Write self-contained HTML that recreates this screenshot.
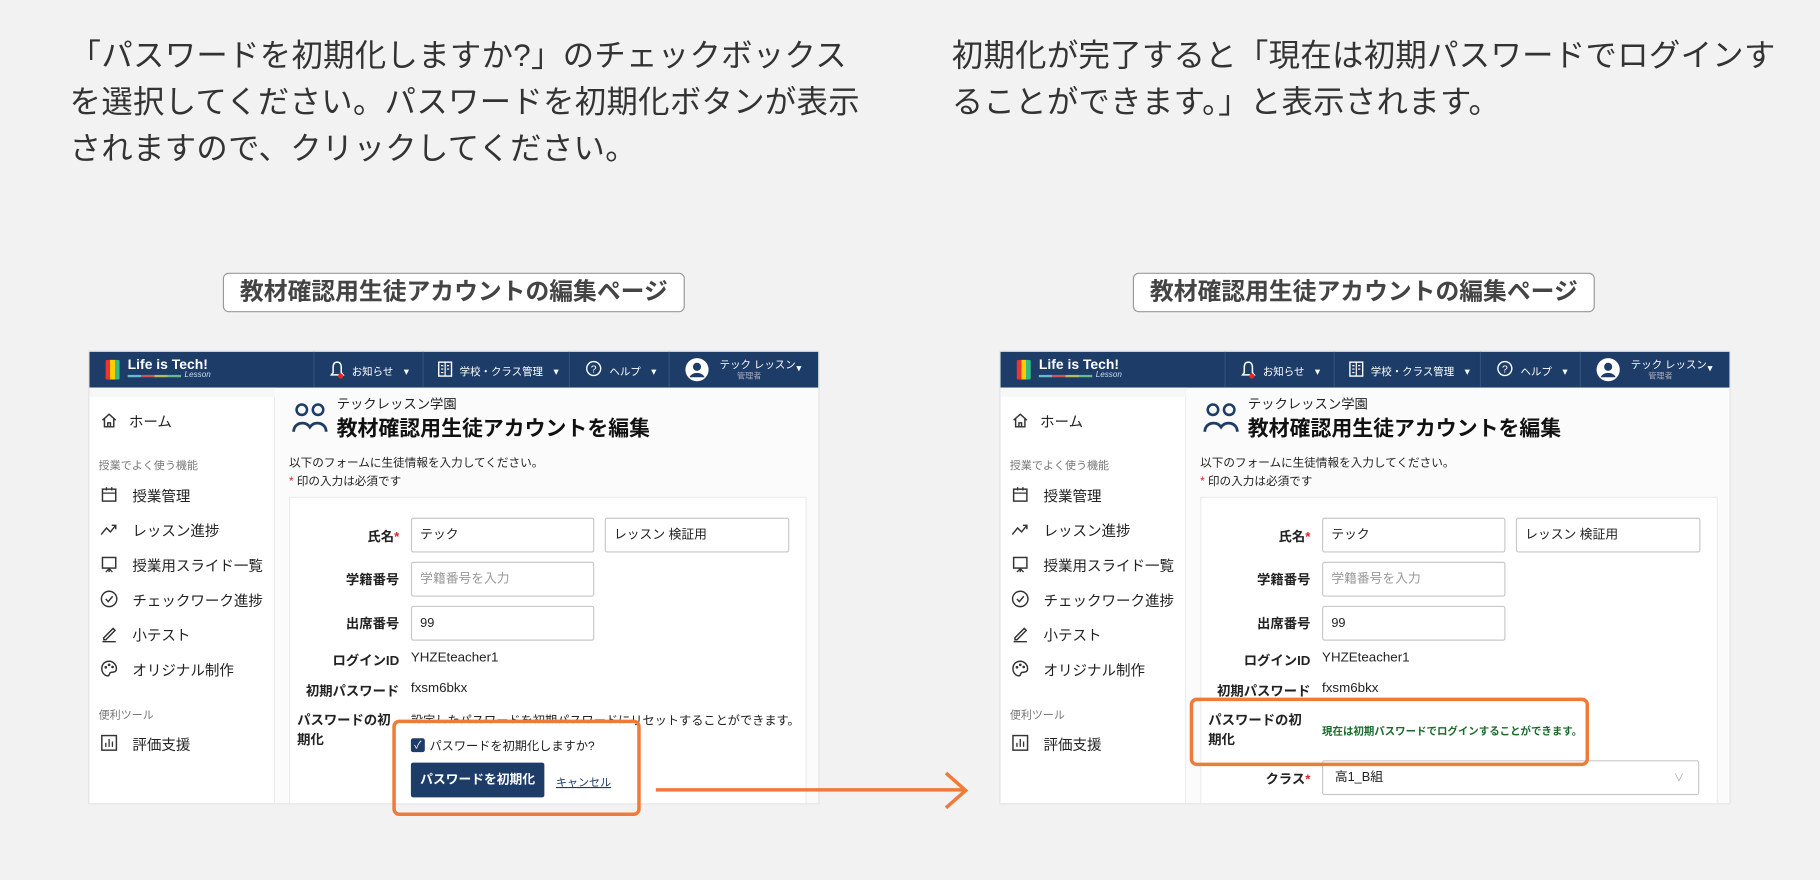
<!DOCTYPE html>
<html><head><meta charset="utf-8">
<style>
*{margin:0;padding:0;box-sizing:border-box}
html,body{width:1820px;height:880px;overflow:hidden;background:#f2f2f2}
body{font-family:"Liberation Sans","Noto Sans CJK JP",sans-serif;color:#333}
#w{position:absolute;left:0;top:0;width:1568px;height:758px;transform:scale(1.16071);transform-origin:0 0}
.a{position:absolute;white-space:nowrap}
.big{font-size:27px;line-height:40px;color:#333;letter-spacing:0.3px}
.tag{position:absolute;height:34px;border:1.5px solid #999;border-radius:5px;background:#fff;font-weight:bold;font-size:20.5px;line-height:31px;text-align:center;color:#444}
.ss{position:absolute;top:303px;width:628px;height:389px;background:#fff;overflow:hidden;outline:1px solid #e2e2e2}
.nav{position:absolute;left:0;top:0;width:100%;height:31px;background:#1d3c68;color:#fff;font-size:9px}
.sep{position:absolute;top:0;width:1px;height:31px;background:#35507a}
.side{position:absolute;left:0;top:31px;width:160px;height:358px;background:#fff;border-right:1px solid #ececec}
.side .strip{position:absolute;left:0;top:0;width:160px;height:8px;background:#f7f7f8}
.it{position:absolute;left:37px;font-size:12.5px;color:#222}
.ic{position:absolute;left:9px;width:16px;height:16px}
.gl{position:absolute;left:8px;font-size:9.5px;color:#777}
.main{position:absolute;left:160px;top:31px;width:468px;height:358px;background:#fbfbfb}
.card{position:absolute;left:12px;top:94px;width:446px;height:280px;background:#fff;border:1px solid #ececec}
.lb{position:absolute;right:361px;font-size:11.5px;font-weight:bold;color:#222;text-align:right}
.inp{position:absolute;height:30px;border:1px solid #c8c8c8;border-radius:2px;background:#fff;font-size:11px;line-height:28px;padding-left:7px;color:#222}
.v{position:absolute;left:277px;font-size:11.5px;color:#222}
.ob{position:absolute;border:3px solid #f07a38;border-radius:6px}
</style></head><body>
<div id="w">
<div class="a big" style="left:60px;top:28px">「パスワードを初期化しますか?」のチェックボックス</div>
<div class="a big" style="left:60px;top:68px">を選択してください。パスワードを初期化ボタンが表示</div>
<div class="a big" style="left:60px;top:108px">されますので、クリックしてください。</div>
<div class="a big" style="left:820px;top:28px">初期化が完了すると「現在は初期パスワードでログインす</div>
<div class="a big" style="left:820px;top:68px">ることができます。」と表示されます。</div>

<div class="tag" style="left:192px;top:235px;width:398px">教材確認用生徒アカウントの編集ページ</div>
<div class="tag" style="left:976px;top:235px;width:398px">教材確認用生徒アカウントの編集ページ</div>

<div class="ss" style="left:77px">
 <div class="nav">
  <div class="a" style="left:14px;top:7px;width:12px;height:17px;background:linear-gradient(90deg,#e33 0 33%,#fc0 33% 66%,#3b8 66%);border-radius:1px"></div>
  <div class="a" style="left:33px;top:4px;font-size:12px;font-weight:bold">Life is Tech!</div>
  <div class="a" style="left:33px;top:20px;width:46px;height:2px;background:linear-gradient(90deg,#6bc 0 25%,#c55 25% 50%,#bb5 50% 75%,#6b8 75%)"></div>
  <div class="a" style="left:82px;top:17px;font-size:7px;font-style:italic;color:#cde">Lesson</div>
  <div class="sep" style="left:193px"></div><div class="sep" style="left:287px"></div><div class="sep" style="left:413px"></div><div class="sep" style="left:499px"></div>
  <svg class="a" style="left:207px;top:7px" width="13" height="17" viewBox="0 0 13 17"><path d="M6.5 2C4 2 3 4 3 6.5V11L1.5 13H11.5L10 11V6.5C10 4 9 2 6.5 2Z" fill="none" stroke="#fff" stroke-width="1.3"/><circle cx="9.5" cy="14" r="2.2" fill="#e22"/></svg>
  <div class="a" style="left:226px;top:10px">お知らせ　▾</div>
  <svg class="a" style="left:300px;top:8px" width="13" height="14"><rect x="1" y="1" width="11" height="12" fill="none" stroke="#fff" stroke-width="1.2"/><path d="M6.5 1V13M3 4H5M3 7H5M3 10H5M8 4H10M8 7H10" stroke="#fff"/></svg>
  <div class="a" style="left:319px;top:10px">学校・クラス管理　▾</div>
  <svg class="a" style="left:427px;top:7px" width="15" height="15"><circle cx="7.5" cy="7.5" r="6" fill="none" stroke="#fff" stroke-width="1.2"/><text x="5" y="11" font-size="9" fill="#fff">?</text></svg>
  <div class="a" style="left:448px;top:10px">ヘルプ　▾</div>
  <svg class="a" style="left:513px;top:5px" width="21" height="21"><circle cx="10.5" cy="10.5" r="10" fill="#fff"/><circle cx="10.5" cy="8" r="3.5" fill="#1d3c68"/><path d="M4 17C6 12 15 12 17 17" fill="#1d3c68"/></svg>
  <div class="a" style="left:543px;top:4px;font-size:9px">テック レッスン</div>
  <div class="a" style="left:558px;top:16px;font-size:7px;color:#aab">管理者</div>
  <div class="a" style="left:609px;top:9px">▾</div>
 </div>
 <div class="side">
  <div class="strip"></div>
  <svg class="ic" style="top:20px" viewBox="0 0 14 14"><path d="M2 7L7 2.5L12 7M3.5 6V12H10.5V6M6 12V9H8V12" fill="none" stroke="#333" stroke-width="1.1"/></svg>
  <div class="it" style="left:34px;top:19px">ホーム</div>
  <div class="gl" style="top:59px">授業でよく使う機能</div>
  <svg class="ic" style="top:84px" viewBox="0 0 14 14"><rect x="2" y="3" width="10" height="9" fill="none" stroke="#333" stroke-width="1.1"/><path d="M2 6H12M5 1.5V4M9 1.5V4" stroke="#333"/></svg>
  <div class="it" style="top:83px">授業管理</div>
  <svg class="ic" style="top:114px" viewBox="0 0 14 14"><path d="M1 11L5 6L8 9L12 4M9 4H12V7" fill="none" stroke="#333" stroke-width="1.1"/></svg>
  <div class="it" style="top:113px">レッスン進捗</div>
  <svg class="ic" style="top:144px" viewBox="0 0 14 14"><rect x="2" y="2" width="10" height="8" fill="none" stroke="#333" stroke-width="1.1"/><path d="M7 10V13M4.5 13L7 10.5L9.5 13" fill="none" stroke="#333"/></svg>
  <div class="it" style="top:143px">授業用スライド一覧</div>
  <svg class="ic" style="top:174px" viewBox="0 0 14 14"><circle cx="7" cy="7" r="5.8" fill="none" stroke="#333" stroke-width="1.1"/><path d="M4.5 7L6.3 9L9.7 5" fill="none" stroke="#333" stroke-width="1.1"/></svg>
  <div class="it" style="top:173px">チェックワーク進捗</div>
  <svg class="ic" style="top:204px" viewBox="0 0 14 14"><path d="M3 10L10 3L11.5 4.5L4.5 11.5H3Z M2 13H12" fill="none" stroke="#333" stroke-width="1.1"/></svg>
  <div class="it" style="top:203px">小テスト</div>
  <svg class="ic" style="top:234px" viewBox="0 0 14 14"><path d="M7 1.5C3.5 1.5 1.5 4 1.5 7C1.5 10 3.5 12.5 6 12.5C7.5 12.5 7 10.5 8 10C10 9.5 12.5 10 12.5 7C12.5 4 10 1.5 7 1.5Z" fill="none" stroke="#333" stroke-width="1.1"/><circle cx="4.5" cy="6" r="1" fill="#333"/><circle cx="7" cy="4.2" r="1" fill="#333"/><circle cx="9.6" cy="5.8" r="1" fill="#333"/></svg>
  <div class="it" style="top:233px">オリジナル制作</div>
  <div class="gl" style="top:274px">便利ツール</div>
  <svg class="ic" style="top:298px" viewBox="0 0 14 14"><rect x="1.5" y="1.5" width="11" height="11" fill="none" stroke="#333" stroke-width="1.1"/><path d="M4.5 10V7M7 10V4M9.5 10V6" stroke="#333"/></svg>
  <div class="it" style="top:297px">評価支援</div>
 </div>
 <div class="main">
  <svg class="a" style="left:14px;top:12px" width="32" height="28"><circle cx="9" cy="7" r="4.5" fill="none" stroke="#1d3c68" stroke-width="2.2"/><circle cx="23" cy="7" r="4.5" fill="none" stroke="#1d3c68" stroke-width="2.2"/><path d="M2 26C2 18 12 16 16 22C20 16 30 18 30 26" fill="none" stroke="#1d3c68" stroke-width="2.4"/></svg>
  <div class="a" style="left:53px;top:6px;font-size:11.5px;color:#222">テックレッスン学園</div>
  <div class="a" style="left:53px;top:21px;font-size:18px;font-weight:bold;color:#111">教材確認用生徒アカウントを編集</div>
  <div class="a" style="left:12px;top:56px;font-size:10px;color:#222">以下のフォームに生徒情報を入力してください。</div>
  <div class="a" style="left:12px;top:72px;font-size:10px;color:#222"><span style="color:#d22">*</span> 印の入力は必須です</div>
  <div class="card"></div>
 </div>
 <div class="lb" style="top:151px">氏名<span style="color:#d22">*</span></div>
 <div class="inp" style="left:277px;top:143px;width:158px">テック</div>
 <div class="inp" style="left:444px;top:143px;width:159px">レッスン 検証用</div>
 <div class="lb" style="top:188px">学籍番号</div>
 <div class="inp" style="left:277px;top:181px;width:158px;color:#999">学籍番号を入力</div>
 <div class="lb" style="top:226px">出席番号</div>
 <div class="inp" style="left:277px;top:219px;width:158px">99</div>
 <div class="lb" style="top:258px">ログインID</div>
 <div class="v" style="top:258px">YHZEteacher1</div>
 <div class="lb" style="top:284px">初期パスワード</div>
 <div class="v" style="top:284px">fxsm6bkx</div>
 <div class="a" style="left:179px;top:310px;font-size:11.5px;font-weight:bold;color:#222;line-height:17px">パスワードの初<br>期化</div>
 <div class="v" style="top:310px;font-size:10.5px">設定したパスワードを初期パスワードにリセットすることができます。</div>
 <div class="a" style="left:262px;top:320px;width:208px;height:78px;background:#fff"></div>
 <div class="a" style="left:277px;top:333px;width:12px;height:12px;background:#1d3c68;border-radius:2px;color:#fff;font-size:9px;line-height:12px;text-align:center">✓</div>
 <div class="a" style="left:293px;top:332px;font-size:10.5px;color:#222">パスワードを初期化しますか?</div>
 <div class="a" style="left:277px;top:354px;width:115px;height:30px;background:#1d3c68;border-radius:2px;color:#fff;font-size:11px;font-weight:bold;line-height:30px;text-align:center">パスワードを初期化</div>
 <div class="a" style="left:402px;top:363px;font-size:9.5px;color:#1d3c68;text-decoration:underline">キャンセル</div>
</div>
<div class="ob" style="left:338px;top:620px;width:214px;height:83px"></div>
<div class="a" style="left:565px;top:679px;width:266px;height:3px;background:#f07a38"></div>
<svg class="a" style="left:812px;top:664px" width="26" height="34"><path d="M3 2L20 17L3 32" fill="none" stroke="#f07a38" stroke-width="3"/></svg>

<div class="ss" style="left:862px">
 <div class="nav">
  <div class="a" style="left:14px;top:7px;width:12px;height:17px;background:linear-gradient(90deg,#e33 0 33%,#fc0 33% 66%,#3b8 66%);border-radius:1px"></div>
  <div class="a" style="left:33px;top:4px;font-size:12px;font-weight:bold">Life is Tech!</div>
  <div class="a" style="left:33px;top:20px;width:46px;height:2px;background:linear-gradient(90deg,#6bc 0 25%,#c55 25% 50%,#bb5 50% 75%,#6b8 75%)"></div>
  <div class="a" style="left:82px;top:17px;font-size:7px;font-style:italic;color:#cde">Lesson</div>
  <div class="sep" style="left:193px"></div><div class="sep" style="left:287px"></div><div class="sep" style="left:413px"></div><div class="sep" style="left:499px"></div>
  <svg class="a" style="left:207px;top:7px" width="13" height="17" viewBox="0 0 13 17"><path d="M6.5 2C4 2 3 4 3 6.5V11L1.5 13H11.5L10 11V6.5C10 4 9 2 6.5 2Z" fill="none" stroke="#fff" stroke-width="1.3"/><circle cx="9.5" cy="14" r="2.2" fill="#e22"/></svg>
  <div class="a" style="left:226px;top:10px">お知らせ　▾</div>
  <svg class="a" style="left:300px;top:8px" width="13" height="14"><rect x="1" y="1" width="11" height="12" fill="none" stroke="#fff" stroke-width="1.2"/><path d="M6.5 1V13M3 4H5M3 7H5M3 10H5M8 4H10M8 7H10" stroke="#fff"/></svg>
  <div class="a" style="left:319px;top:10px">学校・クラス管理　▾</div>
  <svg class="a" style="left:427px;top:7px" width="15" height="15"><circle cx="7.5" cy="7.5" r="6" fill="none" stroke="#fff" stroke-width="1.2"/><text x="5" y="11" font-size="9" fill="#fff">?</text></svg>
  <div class="a" style="left:448px;top:10px">ヘルプ　▾</div>
  <svg class="a" style="left:513px;top:5px" width="21" height="21"><circle cx="10.5" cy="10.5" r="10" fill="#fff"/><circle cx="10.5" cy="8" r="3.5" fill="#1d3c68"/><path d="M4 17C6 12 15 12 17 17" fill="#1d3c68"/></svg>
  <div class="a" style="left:543px;top:4px;font-size:9px">テック レッスン</div>
  <div class="a" style="left:558px;top:16px;font-size:7px;color:#aab">管理者</div>
  <div class="a" style="left:609px;top:9px">▾</div>
 </div>
 <div class="side">
  <div class="strip"></div>
  <svg class="ic" style="top:20px" viewBox="0 0 14 14"><path d="M2 7L7 2.5L12 7M3.5 6V12H10.5V6M6 12V9H8V12" fill="none" stroke="#333" stroke-width="1.1"/></svg>
  <div class="it" style="left:34px;top:19px">ホーム</div>
  <div class="gl" style="top:59px">授業でよく使う機能</div>
  <svg class="ic" style="top:84px" viewBox="0 0 14 14"><rect x="2" y="3" width="10" height="9" fill="none" stroke="#333" stroke-width="1.1"/><path d="M2 6H12M5 1.5V4M9 1.5V4" stroke="#333"/></svg>
  <div class="it" style="top:83px">授業管理</div>
  <svg class="ic" style="top:114px" viewBox="0 0 14 14"><path d="M1 11L5 6L8 9L12 4M9 4H12V7" fill="none" stroke="#333" stroke-width="1.1"/></svg>
  <div class="it" style="top:113px">レッスン進捗</div>
  <svg class="ic" style="top:144px" viewBox="0 0 14 14"><rect x="2" y="2" width="10" height="8" fill="none" stroke="#333" stroke-width="1.1"/><path d="M7 10V13M4.5 13L7 10.5L9.5 13" fill="none" stroke="#333"/></svg>
  <div class="it" style="top:143px">授業用スライド一覧</div>
  <svg class="ic" style="top:174px" viewBox="0 0 14 14"><circle cx="7" cy="7" r="5.8" fill="none" stroke="#333" stroke-width="1.1"/><path d="M4.5 7L6.3 9L9.7 5" fill="none" stroke="#333" stroke-width="1.1"/></svg>
  <div class="it" style="top:173px">チェックワーク進捗</div>
  <svg class="ic" style="top:204px" viewBox="0 0 14 14"><path d="M3 10L10 3L11.5 4.5L4.5 11.5H3Z M2 13H12" fill="none" stroke="#333" stroke-width="1.1"/></svg>
  <div class="it" style="top:203px">小テスト</div>
  <svg class="ic" style="top:234px" viewBox="0 0 14 14"><path d="M7 1.5C3.5 1.5 1.5 4 1.5 7C1.5 10 3.5 12.5 6 12.5C7.5 12.5 7 10.5 8 10C10 9.5 12.5 10 12.5 7C12.5 4 10 1.5 7 1.5Z" fill="none" stroke="#333" stroke-width="1.1"/><circle cx="4.5" cy="6" r="1" fill="#333"/><circle cx="7" cy="4.2" r="1" fill="#333"/><circle cx="9.6" cy="5.8" r="1" fill="#333"/></svg>
  <div class="it" style="top:233px">オリジナル制作</div>
  <div class="gl" style="top:274px">便利ツール</div>
  <svg class="ic" style="top:298px" viewBox="0 0 14 14"><rect x="1.5" y="1.5" width="11" height="11" fill="none" stroke="#333" stroke-width="1.1"/><path d="M4.5 10V7M7 10V4M9.5 10V6" stroke="#333"/></svg>
  <div class="it" style="top:297px">評価支援</div>
 </div>
 <div class="main">
  <svg class="a" style="left:14px;top:12px" width="32" height="28"><circle cx="9" cy="7" r="4.5" fill="none" stroke="#1d3c68" stroke-width="2.2"/><circle cx="23" cy="7" r="4.5" fill="none" stroke="#1d3c68" stroke-width="2.2"/><path d="M2 26C2 18 12 16 16 22C20 16 30 18 30 26" fill="none" stroke="#1d3c68" stroke-width="2.4"/></svg>
  <div class="a" style="left:53px;top:6px;font-size:11.5px;color:#222">テックレッスン学園</div>
  <div class="a" style="left:53px;top:21px;font-size:18px;font-weight:bold;color:#111">教材確認用生徒アカウントを編集</div>
  <div class="a" style="left:12px;top:56px;font-size:10px;color:#222">以下のフォームに生徒情報を入力してください。</div>
  <div class="a" style="left:12px;top:72px;font-size:10px;color:#222"><span style="color:#d22">*</span> 印の入力は必須です</div>
  <div class="card"></div>
 </div>
 <div class="lb" style="top:151px">氏名<span style="color:#d22">*</span></div>
 <div class="inp" style="left:277px;top:143px;width:158px">テック</div>
 <div class="inp" style="left:444px;top:143px;width:159px">レッスン 検証用</div>
 <div class="lb" style="top:188px">学籍番号</div>
 <div class="inp" style="left:277px;top:181px;width:158px;color:#999">学籍番号を入力</div>
 <div class="lb" style="top:226px">出席番号</div>
 <div class="inp" style="left:277px;top:219px;width:158px">99</div>
 <div class="lb" style="top:258px">ログインID</div>
 <div class="v" style="top:258px">YHZEteacher1</div>
 <div class="lb" style="top:284px">初期パスワード</div>
 <div class="v" style="top:284px">fxsm6bkx</div>
 <div class="a" style="left:179px;top:310px;font-size:11.5px;font-weight:bold;color:#222;line-height:17px">パスワードの初<br>期化</div>
 <div class="v" style="top:320px;font-size:9px;font-weight:bold;color:#1a6a2a">現在は初期パスワードでログインすることができます。</div>
 <div class="lb" style="top:360px">クラス<span style="color:#d22">*</span></div>
 <div class="inp" style="left:277px;top:352px;width:325px;padding-left:10px">高1_B組<span style="position:absolute;right:12px;color:#aaa;font-size:9px">∨</span></div>
</div>
<div class="ob" style="left:1025px;top:601px;width:344px;height:59px"></div>
</div>
</body></html>
